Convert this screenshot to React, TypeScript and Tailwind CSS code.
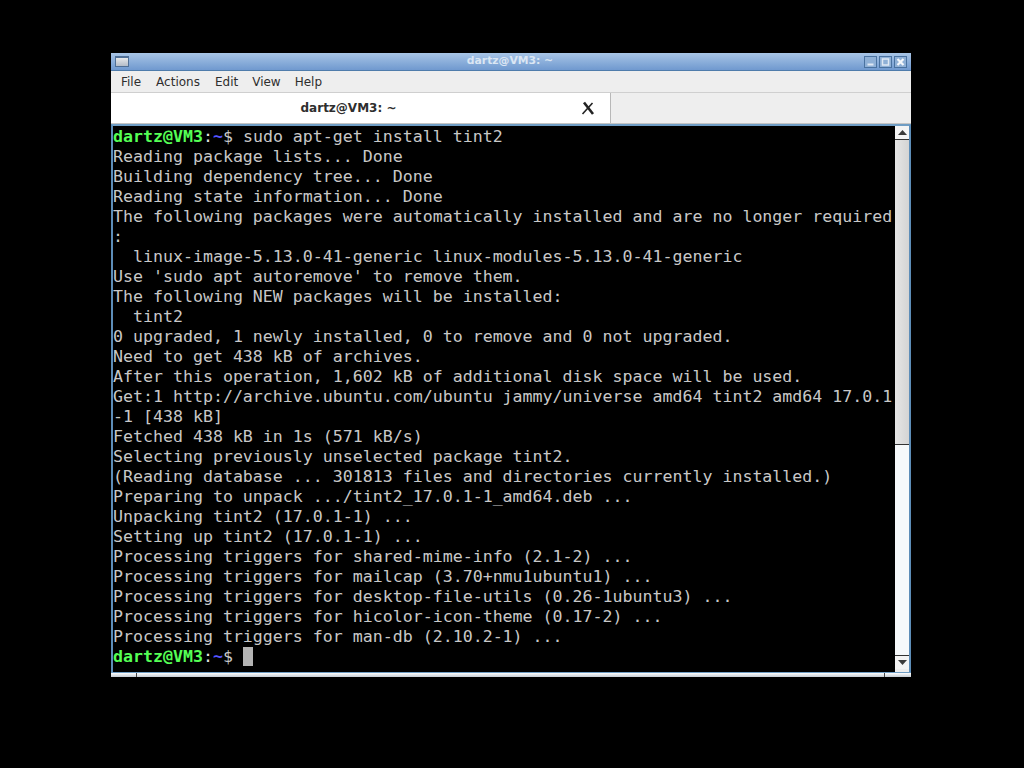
const lines = [
  "Reading package lists... Done",
  "Building dependency tree... Done",
  "Reading state information... Done",
  "The following packages were automatically installed and are no longer required",
  ":",
  "  linux-image-5.13.0-41-generic linux-modules-5.13.0-41-generic",
  "Use 'sudo apt autoremove' to remove them.",
  "The following NEW packages will be installed:",
  "  tint2",
  "0 upgraded, 1 newly installed, 0 to remove and 0 not upgraded.",
  "Need to get 438 kB of archives.",
  "After this operation, 1,602 kB of additional disk space will be used.",
  "Get:1 http://archive.ubuntu.com/ubuntu jammy/universe amd64 tint2 amd64 17.0.1",
  "-1 [438 kB]",
  "Fetched 438 kB in 1s (571 kB/s)",
  "Selecting previously unselected package tint2.",
  "(Reading database ... 301813 files and directories currently installed.)",
  "Preparing to unpack .../tint2_17.0.1-1_amd64.deb ...",
  "Unpacking tint2 (17.0.1-1) ...",
  "Setting up tint2 (17.0.1-1) ...",
  "Processing triggers for shared-mime-info (2.1-2) ...",
  "Processing triggers for mailcap (3.70+nmu1ubuntu1) ...",
  "Processing triggers for desktop-file-utils (0.26-1ubuntu3) ...",
  "Processing triggers for hicolor-icon-theme (0.17-2) ...",
  "Processing triggers for man-db (2.10.2-1) ...",
];

function Prompt() {
  return (
    <>
      <span className="font-bold text-[#55ff55]">dartz@VM3</span>
      <span className="text-[#e0e0e0]">:</span>
      <span className="font-bold text-[#5555ff]">~</span>
      <span className="text-[#c8c8c8]">$ </span>
    </>
  );
}

function WinButton({ children }: { children: React.ReactNode }) {
  return (
    <div className="w-[13px] h-[12px] border border-[#4a72a0] bg-[#8fb0d6] flex items-center justify-center">
      <svg width="11" height="10" viewBox="0 0 11 10">{children}</svg>
    </div>
  );
}

export default function App() {
  return (
    <div className="w-[1024px] h-[768px] bg-black pt-[53px] pl-[111px] overflow-hidden">
      <div className="w-[800px] h-[624px] flex flex-col bg-[#eeeeee] font-['DejaVu_Sans',sans-serif]">
        {/* Title bar */}
        <div className="h-[18px] relative flex items-center justify-between pl-[4px] pr-[4px] bg-gradient-to-b from-[#a8c5e6] to-[#7099cf] border-b border-[#4f7cab]">
          <div className="w-[14px] h-[11px] border border-[#4f6f96] border-t-2 bg-gradient-to-b from-[#e6e8ea] to-[#b4bcc8]" />
          <span className="absolute left-0 right-[2px] text-center text-[10.8px] font-bold text-[#dbe6f3]">dartz@VM3: ~</span>
          <div className="flex gap-[2px]">
            <WinButton><rect x="2.5" y="6.5" width="6" height="2" fill="#dfe8f3" /></WinButton>
            <WinButton><rect x="2.5" y="2" width="6" height="6" fill="none" stroke="#dfe8f3" strokeWidth="1.5" /></WinButton>
            <WinButton><path d="M2.5 2L8.5 8M8.5 2L2.5 8" stroke="#f4f7fb" strokeWidth="2.2" /></WinButton>
          </div>
        </div>

        {/* Menu bar */}
        <div className="h-[21px] pt-[1px] flex items-center gap-[14px] pl-[10px] text-[12px] text-[#2e2e2e]">
          <span>File</span>
          <span className="ml-[1px]">Actions</span>
          <span className="ml-[1px]">Edit</span>
          <span>View</span>
          <span>Help</span>
        </div>

        {/* Tabs */}
        <div className="h-[32px] flex border-t border-[#cfcfcf] border-b border-b-[#c4c4c4]">
          <div className="w-[500px] bg-white border-r border-[#b8b8b8] flex items-center relative pr-[24px]">
            <span className="flex-1 text-center text-[12px] font-bold text-[#2e2e2e]">dartz@VM3: ~</span>
            <svg className="absolute left-[470px] top-[8px]" width="14" height="14" viewBox="0 0 14 14">
              <path d="M3 1.5L12 13" stroke="#222222" strokeWidth="2.6" />
              <path d="M11.5 2L1.5 13" stroke="#222222" strokeWidth="1.6" />
            </svg>
          </div>
        </div>

        {/* Terminal + scrollbar */}
        <div className="flex-1 min-h-0 flex border-t-2 border-[#6f9dc4] border-x-2 border-x-[#5d8db8]">
          <div className="flex-1 bg-black pt-[1px] overflow-hidden font-['DejaVu_Sans_Mono',monospace] text-[16.6px] leading-[20px] whitespace-pre text-[#c8c8c8]">
            <div><Prompt />sudo apt-get install tint2</div>
            {lines.map((l, i) => (
              <div key={i} className="h-[20px]">{l}</div>
            ))}
            <div className="flex items-start">
              <span><Prompt /></span>
              <span className="w-[10px] h-[19px] bg-[#b4b4b4]" />
            </div>
          </div>
          <div className="w-[14px] flex flex-col bg-white mb-[3px]">
            <div className="h-[14px] flex items-center justify-center border-b border-[#333333] bg-[#f4f4f4]">
              <svg width="9" height="5" viewBox="0 0 9 5"><path d="M4.5 0L9 5H0Z" fill="#3a3a3a" /></svg>
            </div>
            <div className="h-[305px] bg-gradient-to-r from-[#e6e6e6] to-[#d4d4d4] border-b border-[#333333]" />
            <div className="flex-1 bg-[#f6f9fb]" />
            <div className="h-[14px] flex items-center justify-center border-t border-[#333333] bg-[#f4f4f4]">
              <svg width="9" height="5" viewBox="0 0 9 5"><path d="M0 0H9L4.5 5Z" fill="#3a3a3a" /></svg>
            </div>
          </div>
        </div>

        {/* Bottom resize edge */}
        <div className="h-[5px] flex border-t border-[#6f9dc4] bg-gradient-to-b from-[#ffffff] to-[#c4ccd4]">
          <div className="w-[26px] border-r border-[#444444]" />
          <div className="w-[748px] border-r border-[#444444]" />
        </div>
      </div>
    </div>
  );
}
